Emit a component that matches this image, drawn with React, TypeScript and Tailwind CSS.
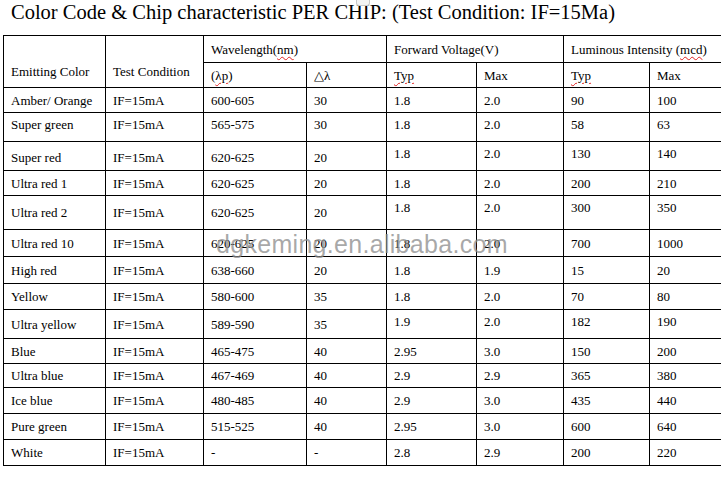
import React from "react";

type Row = {
  name: string;
  wave: string;
  delta: string;
  vTyp: string;
  vMax: string;
  lTyp: string;
  lMax: string;
  h: string;
  left?: string;
  right?: string;
};

const rows: Row[] = [
  { name: "Amber/ Orange", wave: "600-605", delta: "30", vTyp: "1.8", vMax: "2.0", lTyp: "90", lMax: "100", h: "h-[25px]" },
  { name: "Super green", wave: "565-575", delta: "30", vTyp: "1.8", vMax: "2.0", lTyp: "58", lMax: "63", h: "h-[29px]", left: "pb-[6px]", right: "pb-[6px]" },
  { name: "Super red", wave: "620-625", delta: "20", vTyp: "1.8", vMax: "2.0", lTyp: "130", lMax: "140", h: "h-[29px]", left: "pt-[2px]", right: "pb-[6px]" },
  { name: "Ultra red 1", wave: "620-625", delta: "20", vTyp: "1.8", vMax: "2.0", lTyp: "200", lMax: "210", h: "h-[25px]" },
  { name: "Ultra red 2", wave: "620-625", delta: "20", vTyp: "1.8", vMax: "2.0", lTyp: "300", lMax: "350", h: "h-[34px]", right: "pb-[10px]" },
  { name: "Ultra red 10", wave: "620-625", delta: "20", vTyp: "1.8", vMax: "2.0", lTyp: "700", lMax: "1000", h: "h-[27px]" },
  { name: "High red", wave: "638-660", delta: "20", vTyp: "1.8", vMax: "1.9", lTyp: "15", lMax: "20", h: "h-[27px]" },
  { name: "Yellow", wave: "580-600", delta: "35", vTyp: "1.8", vMax: "2.0", lTyp: "70", lMax: "80", h: "h-[26px]" },
  { name: "Ultra yellow", wave: "589-590", delta: "35", vTyp: "1.9", vMax: "2.0", lTyp: "182", lMax: "190", h: "h-[29px]", right: "pb-[6px]" },
  { name: "Blue", wave: "465-475", delta: "40", vTyp: "2.95", vMax: "3.0", lTyp: "150", lMax: "200", h: "h-[25px]" },
  { name: "Ultra blue", wave: "467-469", delta: "40", vTyp: "2.9", vMax: "2.9", lTyp: "365", lMax: "380", h: "h-[24px]" },
  { name: "Ice blue", wave: "480-485", delta: "40", vTyp: "2.9", vMax: "3.0", lTyp: "435", lMax: "440", h: "h-[26px]" },
  { name: "Pure green", wave: "515-525", delta: "40", vTyp: "2.95", vMax: "3.0", lTyp: "600", lMax: "640", h: "h-[26px]" },
  { name: "White", wave: "-", delta: "-", vTyp: "2.8", vMax: "2.9", lTyp: "200", lMax: "220", h: "h-[26px]" },
];

const cell = "border border-black px-[7px] py-0 align-middle text-left font-normal leading-[15px]";

// red squiggle like a word processor spell check
const Squiggle = ({ children }: { children: React.ReactNode }) => (
  <span className="underline decoration-wavy decoration-[#e02020] decoration-1 underline-offset-[2px]">
    {children}
  </span>
);

export default function App() {
  return (
    <div className="relative w-[721px] h-[494px] overflow-hidden bg-white text-black font-['Liberation_Serif','Times_New_Roman',serif]">
      <div className="h-[35px] pl-[11px] text-[20.5px] leading-[24px] whitespace-nowrap">
        Color Code &amp; Chip characteristic PER CHIP: (Test Condition: IF=15Ma)
      </div>

      {/* little toolbar tab peeking at the top */}
      <div className="absolute left-[356px] top-0 w-[14px] h-[6px] rounded-b-[3px] border border-t-0 border-[#c8c8c8] bg-[#f3f3f3]" />

      <div className="pl-[3px]">
        <table className="table-fixed border-collapse w-[726px] text-[13px]">
          <colgroup>
            <col className="w-[102px]" />
            <col className="w-[98px]" />
            <col className="w-[103px]" />
            <col className="w-[80px]" />
            <col className="w-[90px]" />
            <col className="w-[87px]" />
            <col className="w-[86px]" />
            <col className="w-[80px]" />
          </colgroup>
          <thead>
            <tr className="h-[27px]">
              <th rowSpan={2} className={`${cell} pt-[20px]`}>Emitting Color</th>
              <th rowSpan={2} className={`${cell} pt-[20px]`}>Test Condition</th>
              <th colSpan={2} className={cell}>
                Wavelength(<Squiggle>nm</Squiggle>)
              </th>
              <th colSpan={2} className={cell}>Forward Voltage(V)</th>
              <th colSpan={2} className={cell}>
                Luminous Intensity (<Squiggle>mcd</Squiggle>)
              </th>
            </tr>
            <tr className="h-[25px]">
              <th className={cell}>
                (<Squiggle>λp</Squiggle>)
              </th>
              <th className={cell}>△λ</th>
              <th className={cell}>
                <Squiggle>Typ</Squiggle>
              </th>
              <th className={cell}>Max</th>
              <th className={cell}>
                <Squiggle>Typ</Squiggle>
              </th>
              <th className={cell}>Max</th>
            </tr>
          </thead>
          <tbody>
            {rows.map((r) => (
              <tr key={r.name} className={r.h}>
                <td className={`${cell} ${r.left ?? ""}`}>{r.name}</td>
                <td className={`${cell} ${r.left ?? ""}`}>IF=15mA</td>
                <td className={`${cell} ${r.left ?? ""}`}>{r.wave}</td>
                <td className={`${cell} ${r.left ?? ""}`}>{r.delta}</td>
                <td className={`${cell} ${r.right ?? ""}`}>{r.vTyp}</td>
                <td className={`${cell} ${r.right ?? ""}`}>{r.vMax}</td>
                <td className={`${cell} ${r.right ?? ""}`}>{r.lTyp}</td>
                <td className={`${cell} ${r.right ?? ""}`}>{r.lMax}</td>
              </tr>
            ))}
          </tbody>
        </table>
      </div>

      {/* site watermark over the table */}
      <div className="absolute left-[216px] top-[229px] text-[25px] leading-[30px] tracking-[0.3px] text-[#8c8c8c]/75 font-['Liberation_Sans',Arial,sans-serif] pointer-events-none whitespace-nowrap">
        dgkeming.en.alibaba.com
      </div>
    </div>
  );
}
